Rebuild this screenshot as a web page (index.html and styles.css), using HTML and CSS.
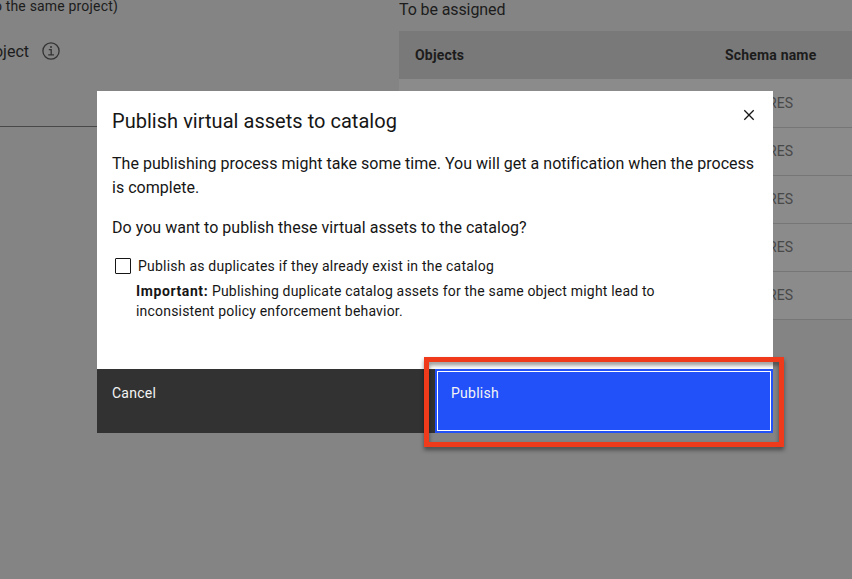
FILE: index.html
```
<!DOCTYPE html>
<html lang="en">
<head>
<meta charset="utf-8">
<title>Publish virtual assets to catalog</title>
<link rel="stylesheet" href="styles.css">
</head>
<body>
<main class="page">
  <section class="options">
    <p class="hint">o the same project)</p>
    <div class="field-label">
      <span class="field-name">oject</span>
      <svg class="info" viewBox="0 0 18 18" fill="none" stroke="currentColor">
        <circle cx="9" cy="9" r="8.1" stroke-width="1.3"/>
        <path d="M6.8 7.6h2.4v5.2M6.2 12.9h5.8" stroke-width="1.3"/>
        <circle cx="9" cy="4.9" r="1" fill="currentColor" stroke="none"/>
      </svg>
    </div>
    <div class="field-line"></div>
  </section>
  <section class="assigned">
    <h2 class="assigned-title">To be assigned</h2>
    <div class="row head"><span>Objects</span><span>Schema name</span></div>
    <div class="row first"><span></span><span class="schema">RES</span></div>
    <div class="row"><span></span><span class="schema">RES</span></div>
    <div class="row"><span></span><span class="schema">RES</span></div>
    <div class="row"><span></span><span class="schema">RES</span></div>
    <div class="row"><span></span><span class="schema">RES</span></div>
  </section>
</main>
<div class="modal" role="dialog">
  <div class="content">
    <header class="modal-head">
      <h1 class="title">Publish virtual assets to catalog</h1>
      <svg class="close" viewBox="0 0 12 12" fill="none" stroke="currentColor" stroke-width="1.3"><path d="M1.3 1.3l9.4 9.4M10.7 1.3l-9.4 9.4"/></svg>
    </header>
    <p class="text">The publishing process might take some time. You will get a notification when the process<br>is complete.</p>
    <p class="text">Do you want to publish these virtual assets to the catalog?</p>
    <div class="check"><span class="box"></span><span>Publish as duplicates if they already exist in the catalog</span></div>
    <p class="note"><strong>Important:</strong> Publishing duplicate catalog assets for the same object might lead to<br>inconsistent policy enforcement behavior.</p>
  </div>
  <footer class="actions">
    <div class="button cancel">Cancel</div>
    <div class="button publish">Publish</div>
  </footer>
</div>
<div class="highlight"></div>
</body>
</html>
```
FILE: styles.css
```
* { box-sizing: border-box; }
body {
  margin: 0;
  width: 852px;
  height: 579px;
  overflow: hidden;
  background: #848484;
  color: #1c1c1c;
  font-family: Roboto, "Liberation Sans", sans-serif;
}
h1, h2, p { margin: 0; font-weight: 400; }
.page { display: grid; grid-template-columns: 399px 453px; }
.options { overflow: hidden; }
.hint {
  width: 118px;
  margin-top: -4px;
  display: flex;
  justify-content: flex-end;
  white-space: nowrap;
  font-size: 14px;
  line-height: 20px;
  letter-spacing: .18px;
}
.field-label {
  display: flex;
  align-items: center;
  gap: 13px;
  height: 24px;
  margin-top: 23px;
}
.field-name {
  width: 29px;
  display: flex;
  justify-content: flex-end;
  font-size: 16px;
}
.info { width: 18px; height: 18px; flex: none; color: #333; }
.field-line { height: 1px; margin-top: 63px; background: #484848; }
.assigned-title {
  margin-top: -2px;
  height: 33px;
  font-size: 16px;
  line-height: 24px;
  letter-spacing: -.1px;
}
.row {
  display: grid;
  grid-template-columns: 310px 1fr;
  align-items: center;
  height: 48px;
  padding: 0 0 1px 16px;
  border-bottom: 1px solid #767676;
  background: #8b8b8b;
  font-size: 14px;
  letter-spacing: .03px;
}
.head {
  padding-bottom: 0;
  background: #797979;
  border: 0;
  font-weight: 700;
  letter-spacing: .18px;
}
.first { height: 49px; padding-bottom: 0; }
.schema { padding-left: 43px; color: #484848; }
.modal {
  position: absolute;
  left: 97px;
  top: 91px;
  width: 676px;
  height: 342px;
  display: flex;
  flex-direction: column;
  background: #fff;
  color: #161616;
}
.content { flex: 1; padding: 17px 16px 0 15px; }
.modal-head { display: flex; justify-content: space-between; height: 44px; }
.title { font-size: 20px; line-height: 26px; letter-spacing: .03px; }
.close { width: 12px; height: 12px; margin: 1px 2px 0 0; }
.text {
  margin-bottom: 16px;
  font-size: 16px;
  line-height: 24px;
  letter-spacing: .025px;
  white-space: nowrap;
}
.check {
  display: flex;
  align-items: center;
  gap: 7px;
  height: 20px;
  margin-top: 16px;
  padding-left: 3px;
  font-size: 14px;
  letter-spacing: .22px;
}
.box { width: 16px; height: 16px; border: 1px solid #161616; border-radius: 1px; }
.note {
  margin-top: 5px;
  padding-left: 24px;
  font-size: 14px;
  line-height: 20px;
  letter-spacing: .19px;
  white-space: nowrap;
}
.note strong { font-weight: 700; letter-spacing: .6px; }
.actions { display: flex; height: 64px; background: #323232; }
.button {
  width: 338px;
  padding: 14px 15px;
  color: #f4f4f4;
  font-size: 14px;
  line-height: 20px;
  letter-spacing: .25px;
}
.publish {
  padding: 12px 14px;
  border: 2px solid #2351f9;
  background: #2351f9;
  outline: 1px solid #fff;
  outline-offset: -3px;
}
.highlight {
  position: absolute;
  left: 424px;
  top: 357px;
  width: 360px;
  height: 90px;
  border: 5px solid #ef3b1c;
  filter: drop-shadow(0 3px 2px rgba(0, 0, 0, .45));
}
```
